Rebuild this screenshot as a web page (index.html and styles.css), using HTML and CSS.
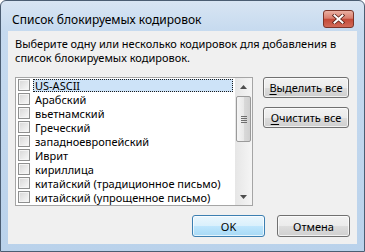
FILE: index.html
```html
<!DOCTYPE html>
<html lang="ru">
<head>
    <meta charset="UTF-8">
    <title>Список блокируемых кодировок</title>
    <link rel="stylesheet" href="styles.css">
</head>
<body>

    <div class="window">
        <!-- заголовок окна -->
        <div class="titlebar">
            <span class="title">Список блокируемых кодировок</span>
            <button class="close" title="Закрыть">
                <svg width="13" height="10" viewBox="0 0 13 10">
                    <path d="M2.5 1.5 L10.5 8.5 M10.5 1.5 L2.5 8.5" stroke="#5a2218" stroke-width="3.6" stroke-linecap="square" fill="none"/>
                    <path d="M2.5 1.5 L10.5 8.5 M10.5 1.5 L2.5 8.5" stroke="#fff" stroke-width="2" stroke-linecap="square" fill="none"/>
                </svg>
            </button>
        </div>

        <div class="client">
            <p class="prompt">Выберите одну или несколько кодировок для добавления в<br>список блокируемых кодировок.</p>

            <div class="main">
                <div class="listbox">
                    <ul class="items">
                        <li class="item selected"><span class="check"></span><span class="label">US-ASCII</span></li>
                        <li class="item"><span class="check"></span><span class="label">Арабский</span></li>
                        <li class="item"><span class="check"></span><span class="label">вьетнамский</span></li>
                        <li class="item"><span class="check"></span><span class="label">Греческий</span></li>
                        <li class="item"><span class="check"></span><span class="label">западноевропейский</span></li>
                        <li class="item"><span class="check"></span><span class="label">Иврит</span></li>
                        <li class="item"><span class="check"></span><span class="label">кириллица</span></li>
                        <li class="item"><span class="check"></span><span class="label">китайский (традиционное письмо)</span></li>
                        <li class="item"><span class="check"></span><span class="label">китайский (упрощенное письмо)</span></li>
                    </ul>
                    <div class="scrollbar">
                        <div class="arrow">
                            <svg width="7" height="4" viewBox="0 0 7 4"><polygon points="0,4 3.5,0 7,4" fill="#4d4d4d"/></svg>
                        </div>
                        <div class="track">
                            <div class="thumb">
                                <span class="grip"></span>
                            </div>
                        </div>
                        <div class="arrow">
                            <svg width="7" height="4" viewBox="0 0 7 4"><polygon points="0,0 7,0 3.5,4" fill="#4d4d4d"/></svg>
                        </div>
                    </div>
                </div>

                <div class="side">
                    <button class="btn btn-wide"><u>В</u>ыделить все</button>
                    <button class="btn btn-wide"><u>О</u>чистить все</button>
                </div>
            </div>

            <div class="footer">
                <button class="btn btn-dialog btn-default">OK</button>
                <button class="btn btn-dialog">Отмена</button>
            </div>
        </div>
    </div>

</body>
</html>
```

FILE: styles.css
```css
/* окно в стиле Windows 7 */
body {
    margin: 0;
    font-family: "Noto Sans", "Open Sans", sans-serif;
    font-size: 11px;
    color: #000;
}

.window {
    width: 365px;
    height: 252px;
    box-sizing: border-box;
    border: 1px solid #4b5d72;
    border-radius: 6px 6px 0 0;
    background: linear-gradient(#d8e5f3, #c6daef 30px, #bad2eb);
    padding: 0 7px 7px;
    display: flex;
    flex-direction: column;
}

.titlebar {
    height: 30px;
    box-sizing: border-box;
    padding: 6px 3px 0 4px;
    display: flex;
    align-items: center;
    justify-content: space-between;
}

.title {
    font-size: 12px;
    white-space: nowrap;
}

.close {
    width: 31px;
    height: 18px;
    box-sizing: border-box;
    padding: 0;
    border: 1px solid #7b3428;
    border-radius: 3px;
    background: linear-gradient(#eab0a2, #d97e6e 45%, #c44a38 52%, #d16a58);
    display: flex;
    align-items: center;
    justify-content: center;
}

.client {
    flex: 1;
    background-color: #f0f0f0;
    padding: 6px 8px 0 7px;
    display: flex;
    flex-direction: column;
}

.prompt {
    margin: 0;
    line-height: 14px;
    white-space: nowrap;
}

.main {
    display: flex;
    gap: 10px;
    margin-top: 12px;
}

.listbox {
    width: 238px;
    height: 129px;
    box-sizing: border-box;
    border: 1px solid #a5a5a5;
    background-color: #fff;
    display: flex;
}

.items {
    list-style: none;
    margin: 0;
    padding: 0;
    flex: 1;
}

.item {
    height: 14px;
    display: flex;
    align-items: center;
    padding-left: 2px;
}

.check {
    width: 12px;
    height: 12px;
    box-sizing: border-box;
    border: 1px solid #8e8f8f;
    background: linear-gradient(135deg, #d6d6d6, #f9f9f9);
    box-shadow: inset 0 0 0 1px #f4f4f4;
    margin-right: 3px;
}

.label {
    width: 200px;
    height: 13px;
    line-height: 13px;
    padding: 0 2px;
    box-sizing: border-box;
    white-space: nowrap;
}

.item.selected .label {
    background-color: #cde3f8;
    outline: 1px dotted #1c1c1c;
    outline-offset: -1px;
}

.scrollbar {
    width: 17px;
    display: flex;
    flex-direction: column;
    background: linear-gradient(to right, #e6e6e6, #f5f5f5);
}

.arrow {
    height: 17px;
    display: flex;
    align-items: center;
    justify-content: center;
}

.track {
    flex: 1;
    padding-top: 1px;
}

.thumb {
    height: 46px;
    box-sizing: border-box;
    margin: 0 1px;
    border: 1px solid #9a9a9a;
    border-radius: 2px;
    background: linear-gradient(to right, #f5f5f5, #e9e9e9 50%, #dadada 51%, #d0d0d0);
    display: flex;
    align-items: center;
    justify-content: center;
}

.grip {
    width: 6px;
    height: 7px;
    background: repeating-linear-gradient(#6e6e6e 0 1px, transparent 1px 2px);
}

.side {
    width: 86px;
    display: flex;
    flex-direction: column;
    gap: 9px;
}

.btn {
    box-sizing: border-box;
    padding: 0;
    border: 1px solid #707070;
    border-radius: 3px;
    background: linear-gradient(#f2f2f2, #ebebeb 50%, #dddddd 51%, #cfcfcf);
    box-shadow: inset 0 0 0 1px rgba(255, 255, 255, 0.7);
    font: inherit;
    color: #000;
}

.btn u {
    text-underline-offset: 2px;
}

.btn-wide {
    height: 21px;
}

.footer {
    display: flex;
    justify-content: flex-end;
    gap: 12px;
    margin-top: 9px;
    margin-right: -1px;
}

.btn-dialog {
    width: 73px;
    height: 22px;
}

.btn-default {
    border-color: #3c7fb1;
    background: linear-gradient(#eaf6fd, #d9f0fc 50%, #bee6fd 51%, #a7d9f5);
}
```
